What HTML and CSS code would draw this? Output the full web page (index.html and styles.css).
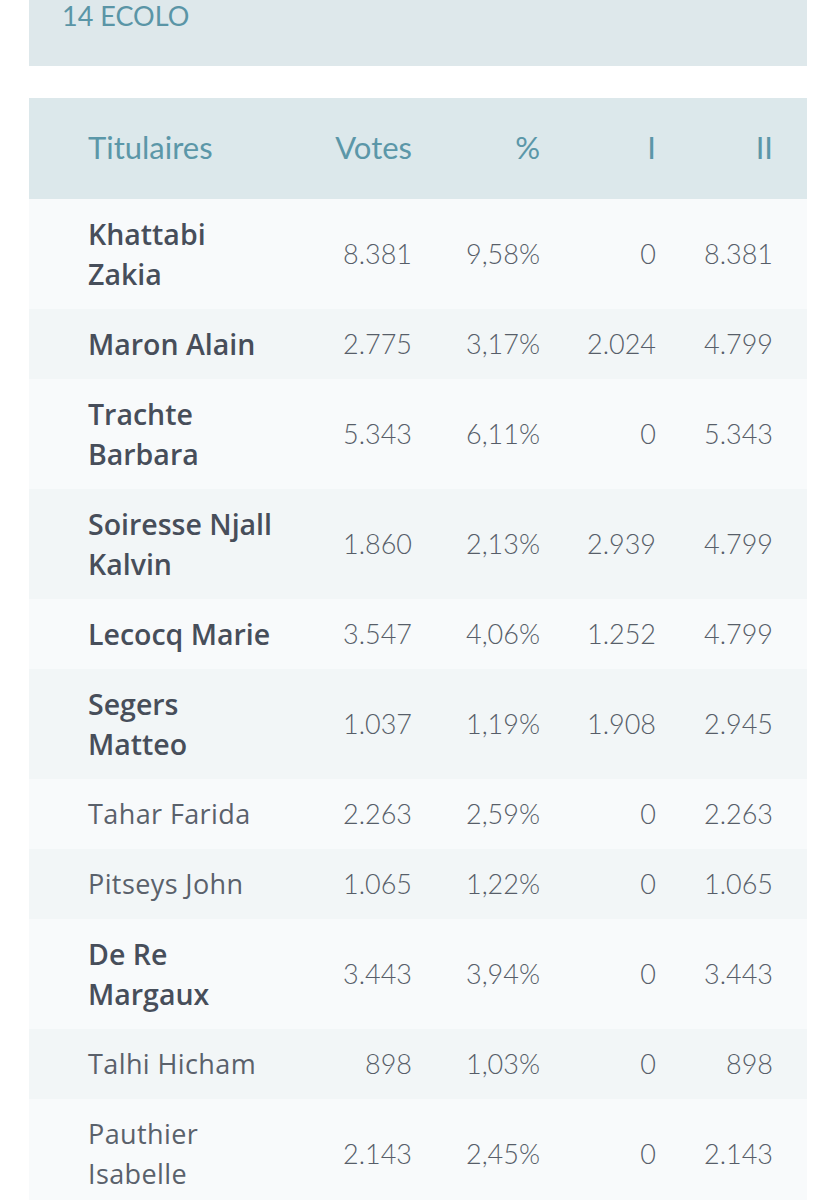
FILE: index.html
```html
<!DOCTYPE html>
<html lang="fr">
<head>
<meta charset="utf-8">
<title>14 ECOLO</title>
<link rel="stylesheet" href="styles.css">
</head>
<body>
<div class="page">
  <div class="list-box">
    <div class="list-title">14 ECOLO</div>
  </div>
  <table class="results">
    <colgroup>
      <col class="c-name"><col class="c-votes"><col class="c-pct"><col class="c-one"><col class="c-two">
    </colgroup>
    <thead>
      <tr><th class="name">Titulaires</th><th>Votes</th><th>%</th><th>I</th><th class="last">II</th></tr>
    </thead>
    <tbody>
      <tr class="elected"><td class="name">Khattabi Zakia</td><td>8.381</td><td>9,58%</td><td>0</td><td class="last">8.381</td></tr>
      <tr class="elected"><td class="name">Maron Alain</td><td>2.775</td><td>3,17%</td><td>2.024</td><td class="last">4.799</td></tr>
      <tr class="elected"><td class="name">Trachte Barbara</td><td>5.343</td><td>6,11%</td><td>0</td><td class="last">5.343</td></tr>
      <tr class="elected"><td class="name">Soiresse Njall Kalvin</td><td>1.860</td><td>2,13%</td><td>2.939</td><td class="last">4.799</td></tr>
      <tr class="elected"><td class="name">Lecocq Marie</td><td>3.547</td><td>4,06%</td><td>1.252</td><td class="last">4.799</td></tr>
      <tr class="elected"><td class="name">Segers Matteo</td><td>1.037</td><td>1,19%</td><td>1.908</td><td class="last">2.945</td></tr>
      <tr><td class="name">Tahar Farida</td><td>2.263</td><td>2,59%</td><td>0</td><td class="last">2.263</td></tr>
      <tr><td class="name">Pitseys John</td><td>1.065</td><td>1,22%</td><td>0</td><td class="last">1.065</td></tr>
      <tr class="elected"><td class="name">De Re Margaux</td><td>3.443</td><td>3,94%</td><td>0</td><td class="last">3.443</td></tr>
      <tr><td class="name">Talhi Hicham</td><td>898</td><td>1,03%</td><td>0</td><td class="last">898</td></tr>
      <tr><td class="name">Pauthier Isabelle</td><td>2.143</td><td>2,45%</td><td>0</td><td class="last">2.143</td></tr>
    </tbody>
  </table>
</div>
</body>
</html>
```

FILE: styles.css
```css
html, body {
  margin: 0;
  padding: 0;
  background: #ffffff;
}

body {
  font-family: Lato, "Open Sans", "Noto Sans", sans-serif;
  color: #535a65;
}

.page {
  width: 778px;
  margin-left: 29px;
}

.list-box {
  height: 66px;
  background: #dee8eb;
  box-sizing: border-box;
  padding-left: 33px;
}

.list-title {
  font-size: 27px;
  line-height: 32px;
  color: #5a95a6;
}

.results {
  margin-top: 32px;
  width: 778px;
  border-collapse: collapse;
  table-layout: fixed;
}

.c-name { width: 254px; }
.c-votes { width: 129px; }
.c-pct { width: 128px; }
.c-one { width: 116px; }
.c-two { width: 151px; }

.results th {
  height: 98px;
  padding: 0 0 3px 0;
  background: #dce8eb;
  color: #5b97a8;
  font-weight: 400;
  font-size: 31px;
  text-align: right;
  vertical-align: middle;
}

.results td {
  padding: 15px 0;
  font-size: 27px;
  line-height: 40px;
  font-weight: 300;
  text-align: right;
  vertical-align: middle;
  color: #575e69;
}

.results .name {
  text-align: left;
  padding-left: 59px;
  padding-right: 7px;
}

.results .last {
  padding-right: 34px;
}

.results tbody tr:nth-child(odd) td {
  background: #f8fafb;
}

.results tbody tr:nth-child(even) td {
  background: #f2f6f7;
}

.results td.name {
  font-family: "Open Sans", Lato, sans-serif;
  font-size: 27px;
  font-weight: 400;
  letter-spacing: 0.4px;
  color: #5a616b;
}

.results tr.elected td.name {
  font-size: 28.5px;
  font-weight: 600;
  color: #474e5a;
  letter-spacing: 0;
}
```
